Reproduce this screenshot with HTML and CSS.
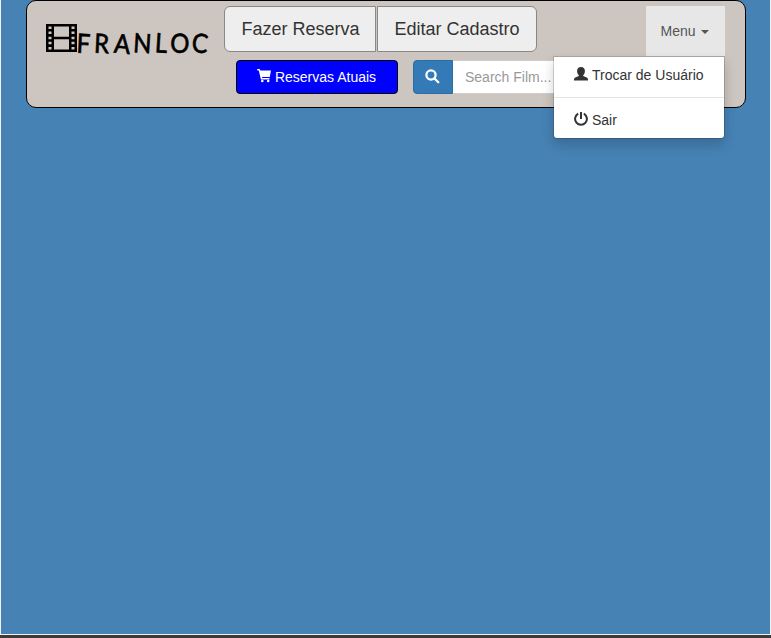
FILE: index.html
```html
<!DOCTYPE html>
<html lang="pt-BR">
<head>
<meta charset="utf-8">
<title>Franloc</title>
<link rel="stylesheet" href="styles.css">
</head>
<body>
<div class="page">
  <header class="navbar">
    <a class="brand" aria-label="Franloc">
      <svg width="176" height="40" viewBox="0 0 176 40">
        <path fill-rule="evenodd" d="M0 0H31V28H0ZM8 2.500V12.700H23V2.500ZM8 15.300V25.500H23V15.300ZM2.500 2.500V5H5.500V2.500ZM2.500 7.500V10H5.500V7.500ZM2.500 12.700V15.200H5.500V12.700ZM2.500 17.800V20.300H5.500V17.800ZM2.500 23V25.500H5.500V23ZM25.500 2.500V5H28.500V2.500ZM25.500 7.500V10H28.500V7.500ZM25.500 12.700V15.200H28.500V12.700ZM25.500 17.800V20.300H28.500V17.800ZM25.500 23V25.500H28.500V23Z"/>
        <text class="wordmark" transform="scale(.9 1)" y="28.500 28.500 28.500 28 28 28 27.500" x="33.500 53 75 96.500 120.500 137.500 161" rotate="3 3 5 4 4 4 7">FRANLOC</text>
      </svg>
    </a>
    <div class="center">
      <nav class="tabs">
        <a class="tab first">Fazer Reserva</a>
        <a class="tab last">Editar Cadastro</a>
      </nav>
      <div class="tools">
        <button class="reservations" type="button">
          <svg width="14" height="14" viewBox="0 0 14 14"><path d="M0 .6Q0 0 .6 0H2.700L3.300 1.500H14L12.800 8H5L5.200 9H12.500V10.500H3.900L1.800 1.400H.6Q0 1.400 0 .6Z"/><circle cx="5.300" cy="12" r="1.300"/><circle cx="11.200" cy="12" r="1.300"/></svg>
          <span>Reservas Atuais</span>
        </button>
        <div class="search">
          <button class="search-button" type="button" aria-label="Search">
            <svg width="15" height="15" viewBox="0 0 15 15"><circle cx="6" cy="6" r="4.600"/><path d="M9.500 9.500L13.300 13.300"/></svg>
          </button>
          <input class="search-input" type="text" placeholder="Search Film...">
        </div>
      </div>
    </div>
    <div class="menu">
      <a class="menu-toggle">Menu<span class="caret"></span></a>
      <div class="dropdown">
        <a class="item">
          <svg width="14" height="14" viewBox="0 0 14 14"><path d="M7 0C9.300 0 10.900 1.400 10.900 3.700C10.900 5.800 10.200 7.300 9.200 8.200V9L12.700 10.600Q14 11.300 14 12.400V13.500H0V12.400Q0 11.300 1.300 10.600L4.800 9V8.200C3.800 7.300 3.100 5.800 3.100 3.700C3.100 1.400 4.700 0 7 0Z"/></svg>
          <span>Trocar de Usuário</span>
        </a>
        <div class="divider"></div>
        <a class="item">
          <svg class="power" width="14" height="14" viewBox="0 0 14 14"><path d="M4.200 1.700A5.900 5.900 0 1 0 9.800 1.700M7 0V7"/></svg>
          <span>Sair</span>
        </a>
      </div>
    </div>
  </header>
</div>
<div class="footer-edge"></div>
</body>
</html>
```
FILE: styles.css
```css
* { box-sizing: border-box; }
body {
  margin: 0;
  height: 638px;
  overflow: hidden;
  color: #333;
  font: 14px/20px "Liberation Sans", Arial, sans-serif;
}
svg { display: block; flex: none; }
.page {
  height: 635px;
  padding: 0 24px 0 25px;
  border: solid #f3f2f0;
  border-width: 0 1px 1px;
  background: #4682b4;
}
.footer-edge { height: 3px; background: #3c3b37; }
.navbar {
  display: flex;
  width: 720px;
  height: 108px;
  padding: 5px 20px 0 19px;
  border: 1px solid #000;
  border-radius: 10px;
  background: #cdc5bf;
}
.brand { width: 178px; padding-top: 18px; }
.wordmark {
  font: 26.5px "Lato", sans-serif;
  fill: #000;
  stroke: #000;
  stroke-width: .7px;
}
.center { width: 422px; }
.tabs { display: flex; gap: 1px; }
.tab {
  height: 46px;
  border: 1px solid #888;
  background: #eee;
  font-size: 18px;
  line-height: 44px;
  text-align: center;
}
.first { width: 152px; padding-left: 1px; border-radius: 6px 0 0 6px; }
.last { width: 160px; border-radius: 0 6px 6px 0; }
.tools { display: flex; gap: 15px; margin: 8px 0 0 12px; }
.reservations {
  display: flex;
  align-items: center;
  justify-content: center;
  gap: 4px;
  width: 162px;
  height: 34px;
  padding: 0 1px 0 0;
  border: 1px solid #000;
  border-radius: 4px;
  background: #00f;
  color: #fff;
  fill: #fff;
  font: inherit;
}
.search { display: flex; }
.search-button {
  display: grid;
  place-items: center;
  width: 40px;
  height: 34px;
  padding: 0 1px 2px 0;
  border: 1px solid #2e6da4;
  border-radius: 4px 0 0 4px;
  background: #337ab7;
  fill: none;
  stroke: #fff;
  stroke-width: 2.3;
  stroke-linecap: round;
}
.search-input {
  width: 160px;
  height: 34px;
  padding: 6px 12px;
  border: 1px solid #ccc;
  border-left: 0;
  border-radius: 0 4px 4px 0;
  font: inherit;
}
.search-input::placeholder { color: #999; opacity: 1; }
.menu { position: relative; width: 79px; }
.menu-toggle {
  display: flex;
  align-items: center;
  justify-content: center;
  gap: 5px;
  height: 50px;
  padding-right: 2px;
  background: #e7e7e7;
  color: #555;
}
.caret {
  border: 4px solid transparent;
  border-top-color: #555;
  border-bottom: 0;
  margin-top: 2px;
}
.dropdown {
  position: absolute;
  top: 50px;
  right: 0;
  width: 172px;
  height: 83px;
  padding-top: 5px;
  border: 1px solid rgba(0, 0, 0, .15);
  border-radius: 0 0 4px 4px;
  background: #fff;
  background-clip: padding-box;
  box-shadow: 0 6px 12px rgba(0, 0, 0, .175);
}
.item {
  display: flex;
  align-items: center;
  gap: 4px;
  height: 26px;
  padding-left: 20px;
  fill: #333;
}
.item svg, .reservations svg { margin-bottom: 2px; }
.power { fill: none; stroke: #333; stroke-width: 2; }
.divider { height: 1px; margin: 9px 0; background: #e5e5e5; }
```
